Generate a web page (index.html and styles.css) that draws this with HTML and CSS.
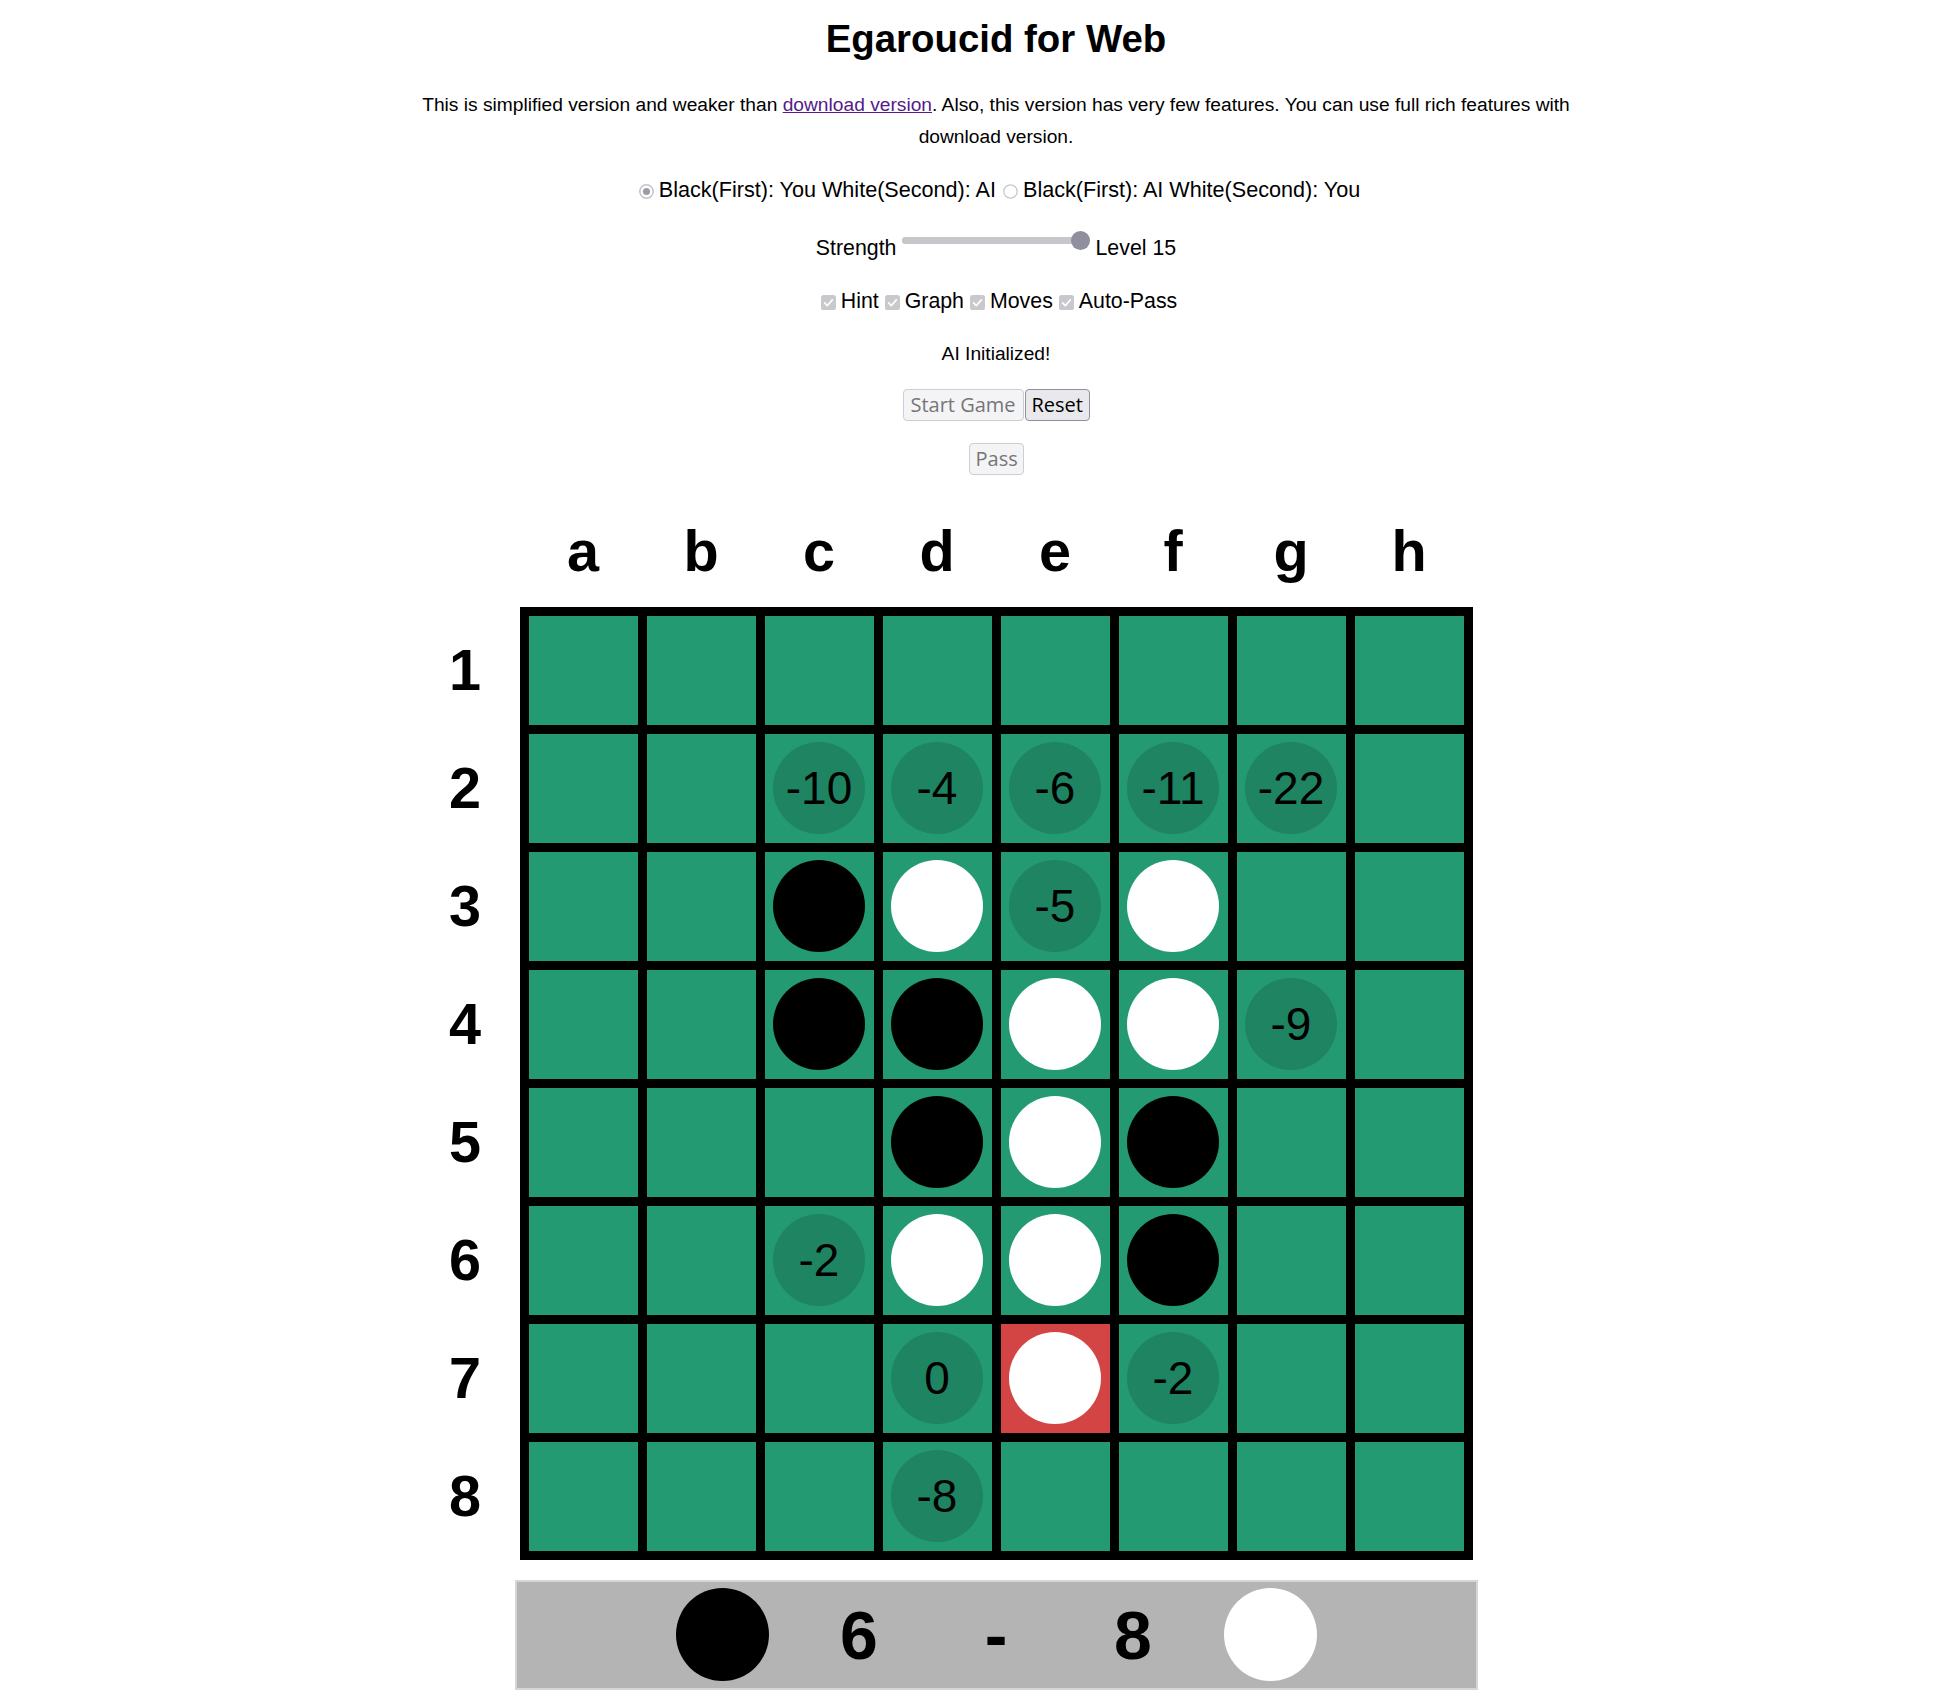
FILE: index.html
```html
<!DOCTYPE html>
<html lang="en">
<head>
<meta charset="utf-8">
<title>Egaroucid for Web</title>
<link rel="stylesheet" href="styles.css">
</head>
<body>
<div class="page">
  <h1 class="title">Egaroucid for Web</h1>
  <p class="intro">This is simplified version and weaker than <a href="#">download version</a>. Also, this version has very few features. You can use full rich features with download version.</p>

  <div class="row mode-row">
    <span class="radio"><svg viewBox="0 0 15 15" width="15" height="15"><circle cx="7.5" cy="7.5" r="6.7" fill="#ffffff" stroke="#c3c3c8" stroke-width="1.5"/><circle cx="7.5" cy="7.5" r="3.6" fill="#9d9da6"/></svg></span><span>Black(First): You White(Second): AI</span><span class="radio"><svg viewBox="0 0 15 15" width="15" height="15"><circle cx="7.5" cy="7.5" r="6.7" fill="#ffffff" stroke="#c8c8cc" stroke-width="1.3"/></svg></span><span>Black(First): AI White(Second): You</span>
  </div>

  <div class="row strength-row">
    <span>Strength</span><input type="range" class="slider" min="0" max="15" value="15" disabled><span>Level 15</span>
  </div>

  <div class="row option-row">
    <span class="check"><svg viewBox="0 0 15 15" width="15" height="15"><rect x="0" y="0" width="15" height="15" rx="2.6" fill="#c8c8cd"/><path d="M3.6 7.9 L6.3 10.6 L11.4 4.9" fill="none" stroke="#ffffff" stroke-width="1.7" stroke-linecap="round" stroke-linejoin="round"/></svg></span><span>Hint</span><span class="check"><svg viewBox="0 0 15 15" width="15" height="15"><rect x="0" y="0" width="15" height="15" rx="2.6" fill="#c8c8cd"/><path d="M3.6 7.9 L6.3 10.6 L11.4 4.9" fill="none" stroke="#ffffff" stroke-width="1.7" stroke-linecap="round" stroke-linejoin="round"/></svg></span><span>Graph</span><span class="check"><svg viewBox="0 0 15 15" width="15" height="15"><rect x="0" y="0" width="15" height="15" rx="2.6" fill="#c8c8cd"/><path d="M3.6 7.9 L6.3 10.6 L11.4 4.9" fill="none" stroke="#ffffff" stroke-width="1.7" stroke-linecap="round" stroke-linejoin="round"/></svg></span><span>Moves</span><span class="check"><svg viewBox="0 0 15 15" width="15" height="15"><rect x="0" y="0" width="15" height="15" rx="2.6" fill="#c8c8cd"/><path d="M3.6 7.9 L6.3 10.6 L11.4 4.9" fill="none" stroke="#ffffff" stroke-width="1.7" stroke-linecap="round" stroke-linejoin="round"/></svg></span><span>Auto-Pass</span>
  </div>

  <div class="status">AI Initialized!</div>

  <div class="buttons">
    <button class="btn btn-start" disabled>Start Game</button><button class="btn btn-reset">Reset</button>
  </div>
  <div class="buttons pass-row">
    <button class="btn btn-pass" disabled>Pass</button>
  </div>

  <div class="board-area">
    <div class="col-labels">
      <span>a</span><span>b</span><span>c</span><span>d</span><span>e</span><span>f</span><span>g</span><span>h</span>
    </div>
    <div class="row-labels">
      <span>1</span><span>2</span><span>3</span><span>4</span><span>5</span><span>6</span><span>7</span><span>8</span>
    </div>
    <div class="board">
      <!-- row 1 -->
      <div class="cell"></div><div class="cell"></div><div class="cell"></div><div class="cell"></div><div class="cell"></div><div class="cell"></div><div class="cell"></div><div class="cell"></div>
      <!-- row 2 -->
      <div class="cell"></div><div class="cell"></div>
      <div class="cell"><span class="hint">-10</span></div>
      <div class="cell"><span class="hint">-4</span></div>
      <div class="cell"><span class="hint">-6</span></div>
      <div class="cell"><span class="hint">-11</span></div>
      <div class="cell"><span class="hint">-22</span></div>
      <div class="cell"></div>
      <!-- row 3 -->
      <div class="cell"></div><div class="cell"></div>
      <div class="cell"><span class="disc black"></span></div>
      <div class="cell"><span class="disc white"></span></div>
      <div class="cell"><span class="hint">-5</span></div>
      <div class="cell"><span class="disc white"></span></div>
      <div class="cell"></div><div class="cell"></div>
      <!-- row 4 -->
      <div class="cell"></div><div class="cell"></div>
      <div class="cell"><span class="disc black"></span></div>
      <div class="cell"><span class="disc black"></span></div>
      <div class="cell"><span class="disc white"></span></div>
      <div class="cell"><span class="disc white"></span></div>
      <div class="cell"><span class="hint">-9</span></div>
      <div class="cell"></div>
      <!-- row 5 -->
      <div class="cell"></div><div class="cell"></div><div class="cell"></div>
      <div class="cell"><span class="disc black"></span></div>
      <div class="cell"><span class="disc white"></span></div>
      <div class="cell"><span class="disc black"></span></div>
      <div class="cell"></div><div class="cell"></div>
      <!-- row 6 -->
      <div class="cell"></div><div class="cell"></div>
      <div class="cell"><span class="hint">-2</span></div>
      <div class="cell"><span class="disc white"></span></div>
      <div class="cell"><span class="disc white"></span></div>
      <div class="cell"><span class="disc black"></span></div>
      <div class="cell"></div><div class="cell"></div>
      <!-- row 7 -->
      <div class="cell"></div><div class="cell"></div><div class="cell"></div>
      <div class="cell"><span class="hint">0</span></div>
      <div class="cell last"><span class="disc white"></span></div>
      <div class="cell"><span class="hint">-2</span></div>
      <div class="cell"></div><div class="cell"></div>
      <!-- row 8 -->
      <div class="cell"></div><div class="cell"></div><div class="cell"></div>
      <div class="cell"><span class="hint">-8</span></div>
      <div class="cell"></div><div class="cell"></div><div class="cell"></div><div class="cell"></div>
    </div>
  </div>

  <div class="score-bar">
    <div class="slot"><span class="disc black"></span></div>
    <div class="slot score">6</div>
    <div class="slot score">-</div>
    <div class="slot score">8</div>
    <div class="slot"><span class="disc white"></span></div>
  </div>
</div>
</body>
</html>
```

FILE: styles.css
```css
* { box-sizing: border-box; }

body {
  margin: 0;
  background: #ffffff;
  color: #000000;
  font-family: "Liberation Sans", Arial, sans-serif;
}

.page {
  padding-left: 40px;
  padding-top: 14px;
  text-align: center;
}

.title {
  margin: 0;
  height: 50px;
  line-height: 50px;
  font-size: 38.4px;
  font-weight: bold;
}

.intro {
  margin: 24.8px auto 0;
  max-width: 1200px;
  font-size: 19.2px;
  line-height: 32.5px;
}

.intro a { color: #551a8b; }

.row {
  display: flex;
  justify-content: center;
  align-items: center;
  height: 30px;
  font-size: 21.33px;
  line-height: 30px;
  white-space: nowrap;
}

.mode-row {
  margin-top: 21.2px;
  font-size: 21.6px;
}
.strength-row { margin-top: 27.75px; }
.option-row { margin-top: 23px; }

.radio,
.check {
  display: block;
  width: 15px;
  height: 15px;
}

.radio svg,
.check svg { display: block; }

.radio { margin: 3.5px 5px 0 7px; }
.check { margin: 4.5px 5px 0 6px; }

.slider {
  -webkit-appearance: none;
  appearance: none;
  width: 188px;
  height: 19px;
  margin: 0 6px 14.5px 5px;
  padding: 0;
  background: transparent;
}

.slider::-webkit-slider-runnable-track {
  height: 6.4px;
  background: #c6c6cb;
  border-radius: 3px;
}

.slider::-webkit-slider-thumb {
  -webkit-appearance: none;
  appearance: none;
  width: 19px;
  height: 19px;
  margin-top: -6.3px;
  border-radius: 50%;
  background: #8f8f9d;
  border: none;
}

.status {
  margin-top: 22.8px;
  height: 30px;
  line-height: 30px;
  font-size: 19.2px;
}

.buttons {
  display: flex;
  justify-content: center;
  gap: 1px;
  margin-top: 20.75px;
}

.pass-row { margin-top: 22.6px; }

.btn {
  height: 31.4px;
  padding: 0 6px;
  border-radius: 4px;
  font-family: "Open Sans", "Noto Sans", sans-serif;
  font-size: 20px;
  line-height: 28px;
  border: 1px solid #8f8f9d;
  background: #e9e9ed;
  color: #000000;
}

.btn:disabled {
  border-color: #cdcdd2;
  background: #f4f4f6;
  color: #767676;
}

.btn-start { width: 121px; }
.btn-reset { width: 65px; }
.btn-pass { width: 55px; }

.board-area {
  display: grid;
  grid-template-columns: 109px 953px 109px;
  grid-template-rows: auto 953px;
  justify-content: center;
  margin-top: 43.8px;
}

.col-labels {
  grid-column: 2;
  grid-row: 1;
  display: grid;
  grid-template-columns: repeat(8, 109px);
  column-gap: 9px;
  padding: 0 9px;
  height: 66px;
  line-height: 66px;
  margin-bottom: 22.5px;
  font-size: 57.6px;
  font-weight: bold;
}

.row-labels {
  grid-column: 1;
  grid-row: 2;
  display: grid;
  grid-template-rows: repeat(8, 109px);
  row-gap: 9px;
  padding-top: 9px;
  line-height: 109px;
  font-size: 57.6px;
  font-weight: bold;
}

.board {
  grid-column: 2;
  grid-row: 2;
  display: grid;
  grid-template-columns: repeat(8, 109px);
  grid-template-rows: repeat(8, 109px);
  gap: 9px;
  padding: 9px;
  background: #000000;
}

.cell {
  display: flex;
  align-items: center;
  justify-content: center;
  background: #249a72;
}

.cell.last { background: #d34545; }

.disc {
  display: block;
  width: 92px;
  height: 92px;
  border-radius: 50%;
}

.disc.black { background: #000000; }
.disc.white { background: #ffffff; }

.hint {
  display: flex;
  align-items: center;
  justify-content: center;
  width: 92px;
  height: 92px;
  border-radius: 50%;
  background: #1e8462;
  font-size: 46px;
  color: #000000;
}

.score-bar {
  display: flex;
  justify-content: center;
  align-items: center;
  width: 963px;
  height: 110px;
  margin: 20px auto 0;
  background: #b4b4b4;
  border: 2px solid #d6d6d6;
}

.slot {
  display: flex;
  align-items: center;
  justify-content: center;
  width: 137px;
  height: 93px;
}

.slot .disc {
  width: 93px;
  height: 93px;
}

.score {
  font-size: 68px;
  font-weight: bold;
}
```
